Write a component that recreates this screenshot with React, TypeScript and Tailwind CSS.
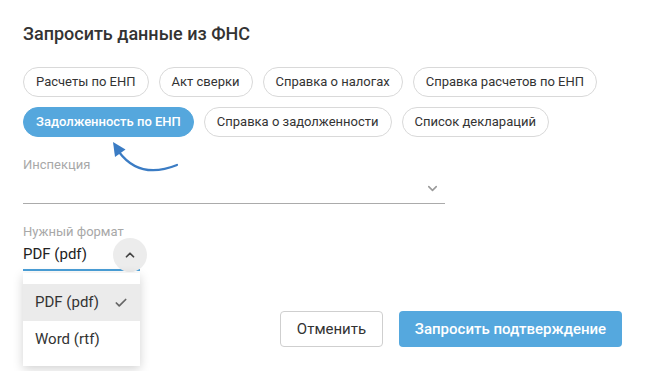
import { Check, ChevronDown, ChevronUp } from 'lucide-react';

const rowOne = ['Расчеты по ЕНП', 'Акт сверки', 'Справка о налогах', 'Справка расчетов по ЕНП'];
const rowTwo = ['Справка о задолженности', 'Список деклараций'];

function Chip({ label, active }: { label: string; active?: boolean }) {
  if (active) {
    return (
      <span className="h-[30px] px-[12px] flex items-center rounded-full bg-[#55a7dd] border border-[#55a7dd] text-white text-[13px] font-medium">
        {label}
      </span>
    );
  }
  return (
    <span className="h-[30px] px-[12px] flex items-center rounded-full border border-[#d9d9d9] bg-white text-[#333] text-[13px]">
      {label}
    </span>
  );
}

export default function App() {
  return (
    <div
      className="relative w-[647px] h-[371px] bg-white overflow-hidden pt-[24px] pl-[23px] pr-[25px]"
      style={{ fontFamily: 'Roboto, "Noto Sans", sans-serif' }}
    >
      <h2 className="text-[18px] leading-[20px] font-medium text-[#333]">Запросить данные из ФНС</h2>

      {/* Chips */}
      <div className="mt-[23px] w-[600px] flex flex-wrap gap-x-[10px] gap-y-[10px]">
        {rowOne.map((c) => (
          <Chip key={c} label={c} />
        ))}
        <Chip label="Задолженность по ЕНП" active />
        {rowTwo.map((c) => (
          <Chip key={c} label={c} />
        ))}
      </div>

      {/* Inspection select */}
      <div className="mt-[20px] w-[422px]">
        <div className="text-[13px] leading-[16px] text-[#a8a8a8]">Инспекция</div>
        <div className="h-[31px] border-b border-[#ababab] flex items-center justify-end pr-[5px]">
          <ChevronDown className="w-[15px] h-[15px] text-[#9a9a9a]" strokeWidth={2.5} />
        </div>
      </div>

      {/* Format select */}
      <div className="relative mt-[20px] w-[117px]">
        <div className="text-[13px] leading-[16px] text-[#a8a8a8]">Нужный формат</div>
        <div className="h-[31px] border-b-2 border-[#4a9fd8] flex items-center justify-between">
          <span className="text-[15px] text-[#222]">PDF (pdf)</span>
          <span className="w-[34px] h-[34px] -mr-[7px] rounded-full bg-[#ececec] flex items-center justify-center">
            <ChevronUp className="w-[14px] h-[14px] text-[#444]" strokeWidth={3} />
          </span>
        </div>

        {/* Open menu */}
        <div className="absolute left-0 top-[49px] w-[117px] bg-white pt-[11px] pb-[8px] shadow-[0_3px_10px_rgba(0,0,0,0.18)] z-10">
          <div className="h-[37px] bg-[#ebebeb] flex items-center justify-between pl-[12px] pr-[12px]">
            <span className="text-[15px] text-[#333]">PDF (pdf)</span>
            <Check className="w-[14px] h-[14px] text-[#666]" strokeWidth={3} />
          </div>
          <div className="h-[37px] flex items-center pl-[12px]">
            <span className="text-[15px] text-[#333]">Word (rtf)</span>
          </div>
        </div>
      </div>

      {/* Actions */}
      <div className="mt-[40px] flex justify-end gap-[16px]">
        <button className="h-[36px] w-[103px] rounded-[4px] border border-[#cfcfcf] bg-white text-[15px] text-[#333]">
          Отменить
        </button>
        <button className="h-[36px] w-[223px] rounded-[4px] bg-[#55a8de] text-[15px] font-medium text-white">
          Запросить подтверждение
        </button>
      </div>

      {/* Hint arrow */}
      <svg className="absolute left-0 top-0 pointer-events-none" width="647" height="371" viewBox="0 0 647 371">
        <path d="M177 165 Q140 180 119 152" fill="none" stroke="#3b7cc4" strokeWidth="2.2" strokeLinecap="round" />
        <path d="M113 142 L125.5 149.5 L115 157 Z" fill="#3b7cc4" />
      </svg>
    </div>
  );
}
